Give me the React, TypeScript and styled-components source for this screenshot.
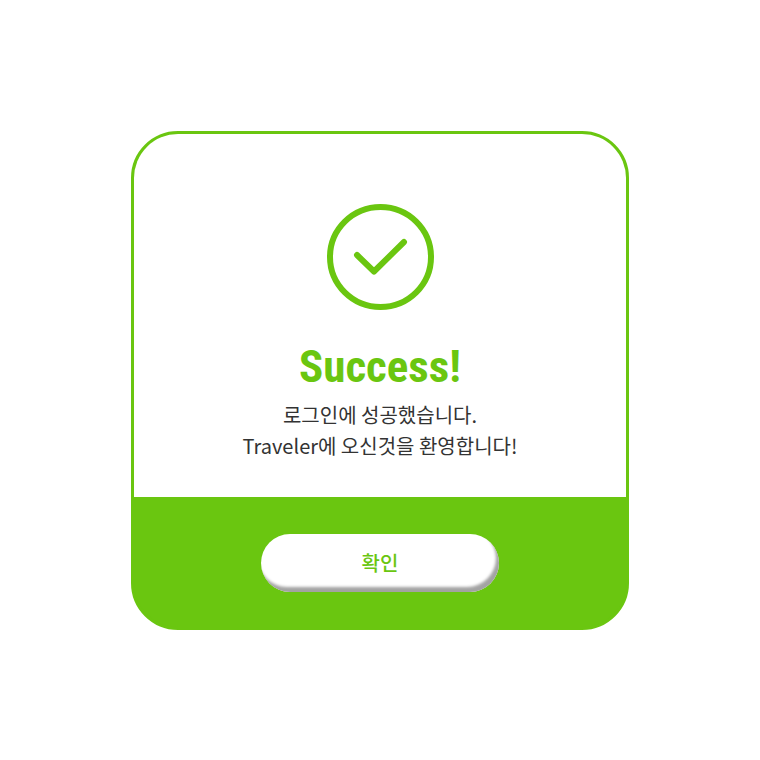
import React from 'react';
import styled, { createGlobalStyle } from 'styled-components';

const GREEN = '#6ac610';

const GlobalStyle = createGlobalStyle`
  * { box-sizing: border-box; }
  body { margin: 0; background: #fff; }
`;

const Page = styled.main`
  min-height: 100vh;
  display: grid;
  place-items: center;
  padding: 24px;
  font-family: 'Noto Sans CJK KR', sans-serif;
`;

const Dialog = styled.section`
  width: 100%;
  max-width: 498px;
  border: 3px solid ${GREEN};
  border-radius: 47px;
  background: ${GREEN};
`;

const Content = styled.div`
  display: flex;
  flex-direction: column;
  align-items: center;
  padding: 69px 24px 36px;
  border-radius: 44px 44px 0 0;
  background: #fff;
  text-align: center;
`;

const CheckIcon = styled.svg`
  width: 108px;
  height: 108px;
  fill: none;
  stroke: ${GREEN};
  stroke-width: 6;
  stroke-linecap: round;
  stroke-linejoin: round;
`;

const Title = styled.h1`
  margin: 28px 0 4px;
  font-family: 'Roboto Condensed', 'Roboto', sans-serif;
  font-size: 45px;
  line-height: 56px;
  font-weight: 700;
  color: ${GREEN};
`;

const Message = styled.p`
  margin: 0;
  font-size: 20px;
  line-height: 31px;
  font-weight: 400;
  color: #333;
`;

const Footer = styled.footer`
  display: flex;
  justify-content: center;
  padding: 37px 24px 35px;
`;

const ConfirmButton = styled.button`
  width: 238px;
  height: 58px;
  padding: 0;
  border: 0;
  border-radius: 29px;
  background: #fff;
  box-shadow: inset -3px -5px 3px #a3a3a3;
  font-family: inherit;
  font-size: 20px;
  font-weight: 500;
  color: ${GREEN};
  cursor: pointer;
`;

export default function App() {
  return (
    <>
      <GlobalStyle />
      <Page>
        <Dialog role="dialog" aria-labelledby="dialog-title">
          <Content>
            <CheckIcon viewBox="0 0 108 108" aria-hidden="true">
              <ellipse cx="54.5" cy="54" rx="50.5" ry="50" />
              <path d="M31 52 48 68.500 78 39" />
            </CheckIcon>
            <Title id="dialog-title">Success!</Title>
            <Message>
              로그인에 성공했습니다.
              <br />
              Traveler에 오신것을 환영합니다!
            </Message>
          </Content>
          <Footer>
            <ConfirmButton type="button">확인</ConfirmButton>
          </Footer>
        </Dialog>
      </Page>
    </>
  );
}
